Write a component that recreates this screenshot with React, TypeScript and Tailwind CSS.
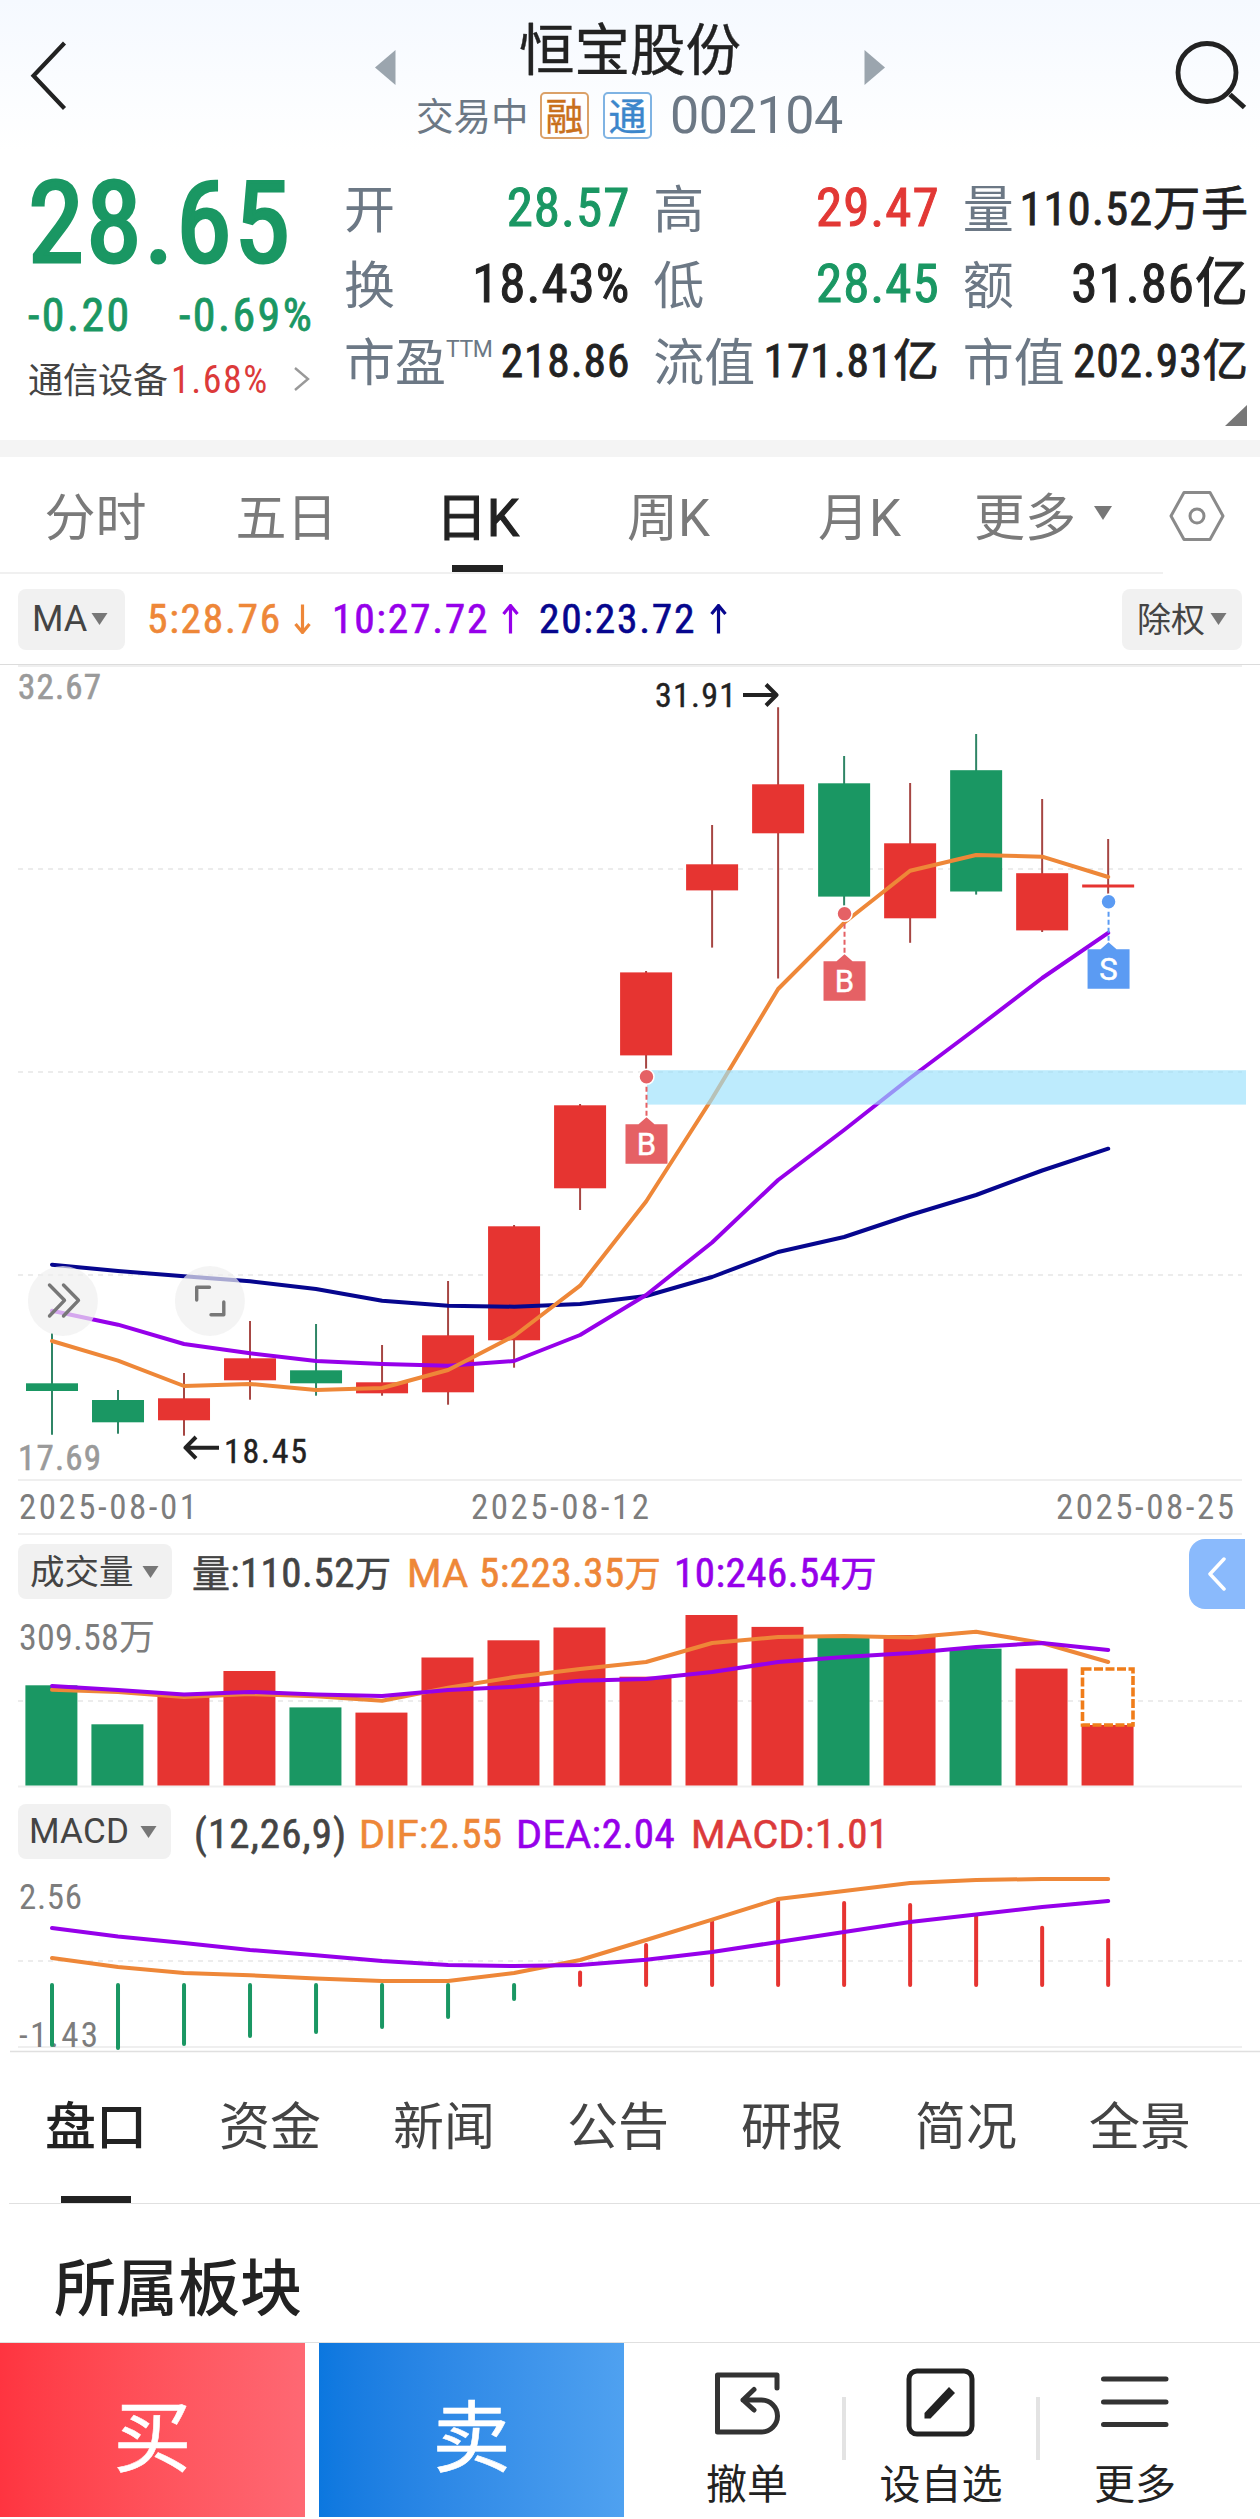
import type { ReactNode } from "react";

const RED = "#e63431";
const GREEN = "#1a9763";
const ORANGE = "#ee8738";
const PURPLE = "#9600ea";
const NAVY = "#06068e";

const cx = (i: number) => 52 + 66.01 * i;
const points = (ys: number[]) => ys.map((y, i) => `${cx(i).toFixed(1)},${y}`).join(" ");

function Line({ ys, color, w = 4 }: { ys: number[]; color: string; w?: number }) {
  return <polyline points={points(ys)} fill="none" stroke={color} strokeWidth={w} strokeLinecap="round" strokeLinejoin="round" />;
}

function Down({ className }: { className?: string }) {
  return (
    <svg className={className} width="17" height="12" viewBox="0 0 17 12">
      <path d="M.5 0h16L8.5 12z" fill="#777" />
    </svg>
  );
}

function Arrow({ up, color }: { up?: boolean; color: string }) {
  return (
    <svg width="17" height="30" viewBox="0 0 17 30" className={up ? "" : "rotate-180"}>
      <path d="M8.5 29.5V2M1.5 10l7-8.5 7 8.5" fill="none" stroke={color} strokeWidth="3.2" />
    </svg>
  );
}

function Header() {
  return (
    <header className="flex h-[150px] bg-gradient-to-b from-[#f5f9ff] to-white">
      <div className="w-[375px] shrink-0 pl-[28px] pt-[39px]">
        <svg width="42" height="74" viewBox="0 0 42 74">
          <path d="M36.500 4L5.500 36.700 36.500 69.500" fill="none" stroke="#222" strokeWidth="4.200" />
        </svg>
      </div>
      <svg className="mt-[50px] shrink-0" width="21" height="35" viewBox="0 0 21 35">
        <path d="M20.500 0v35L0 17.500z" fill="#9ba5ae" />
      </svg>
      <div className="w-[468px] shrink-0 pt-[24px]">
        <h1 className="text-center text-[55.500px] leading-none text-[#222] [-webkit-text-stroke:0.4px]">恒宝股份</h1>
        <div className="mt-[12.5px] flex h-[47px] items-center pl-[20px] leading-none text-[#6c7885]">
          <span className="w-[124px] translate-y-[2px] text-[37.500px]">交易中</span>
          <span className="flex h-[47px] w-[49px] justify-center rounded-[5px] border-2 border-[#dba168] bg-white pt-[4px] text-[38px] text-[#c9701c] [-webkit-text-stroke:0.4px]">融</span>
          <span className="ml-[14px] flex h-[47px] w-[49px] justify-center rounded-[5px] border-2 border-[#7fb3e3] bg-white pt-[4px] text-[38px] text-[#3c86cb] [-webkit-text-stroke:0.4px]">通</span>
          <span className="ml-[18px] text-[52px] tracking-[-0.4px]">002104</span>
        </div>
      </div>
      <svg className="mt-[50px] shrink-0" width="21" height="35" viewBox="0 0 21 35">
        <path d="M.5 0v35L21 17.500z" fill="#9ba5ae" />
      </svg>
      <svg className="ml-[286px] mt-[36px] shrink-0" width="80" height="80" viewBox="0 0 80 80">
        <circle cx="36" cy="36.500" r="29" fill="none" stroke="#222" strokeWidth="4.800" />
        <path d="M59 58.500L73.500 71.500" stroke="#222" strokeWidth="5" />
      </svg>
    </header>
  );
}

function Cell({ label, sup, children, cls }: { label: string; sup?: string; children: ReactNode; cls: string }) {
  return (
    <div className="flex h-[76.5px] items-center justify-between whitespace-nowrap leading-none">
      <span className="-ml-[2px] flex w-0 translate-y-[2px] text-[51px] text-[#6c7885]">
        {label}
        {sup && <sup className="top-0 text-[23px] leading-none tracking-[-0.5px]">{sup}</sup>}
      </span>
      <span className={cls}>{children}</span>
    </div>
  );
}

const big = "-mr-[2px] text-[53px] [font-stretch:87%] tracking-[1px] [-webkit-text-stroke:1px]";
const mid = "-mr-[2px] text-[45.500px] [font-stretch:87%] tracking-[0.9px] [-webkit-text-stroke:0.8px]";

function Quote() {
  return (
    <section className="flex h-[290px]">
      <div className="w-[346px] shrink-0 pl-[28px] pt-[17px] leading-none text-[#1a9763]">
        <div className="text-[113px] [font-stretch:87%] tracking-[2.2px] [-webkit-text-stroke:3.200px]">28.65</div>
        <div className="mt-[12px] flex text-[46px] [font-stretch:87%] tracking-[2.4px] [-webkit-text-stroke:0.8px]">
          <span className="w-[151px]">-0.20</span>
          <span className="whitespace-nowrap">-0.69%</span>
        </div>
        <div className="mt-[22px] flex h-[40px] items-center text-[35px] text-[#444]">
          <span className="translate-y-[1px]">通信设备</span>
          <span className="ml-[3px] w-[119px] text-[38px] [font-stretch:87%] tracking-[1.5px] text-[#dc3a3a]">1.68%</span>
          <svg className="ml-[3px] mb-[2px]" width="18" height="26" viewBox="0 0 18 26">
            <path d="M2 2l13 11L2 24" fill="none" stroke="#999" strokeWidth="2.400" />
          </svg>
        </div>
      </div>
      <div className="w-[901px] pt-[20px] text-[#222]">
        <div className="grid grid-cols-3 gap-x-[27px]">
          <Cell label="开" cls={big + " text-[#1a9763]"}>28.57</Cell>
          <Cell label="高" cls={big + " text-[#e23835]"}>29.47</Cell>
          <Cell label="量" cls={mid}><span className="text-[47px]">110.52万手</span></Cell>
          <Cell label="换" cls={big}>18.43%</Cell>
          <Cell label="低" cls={big + " text-[#1a9763]"}>28.45</Cell>
          <Cell label="额" cls={big}>31.86亿</Cell>
          <Cell label="市盈" sup="TTM" cls={mid}>218.86</Cell>
          <Cell label="流值" cls={mid}>171.81亿</Cell>
          <Cell label="市值" cls={mid}>202.93亿</Cell>
        </div>
        <svg className="ml-auto mt-[5px]" width="22" height="21" viewBox="0 0 22 21">
          <path d="M22 0v21H0z" fill="#777" />
        </svg>
      </div>
    </section>
  );
}

function PeriodTabs() {
  const tab = "flex h-full flex-col items-center justify-between pt-[36px] whitespace-nowrap";
  return (
    <nav className="flex h-[117px] text-[51px] leading-none text-[#7a7a7a]">
      <div className="flex w-[1163px] border-b-2 border-[#f0f0f0]">
        <span className={tab + " w-[191px]"}>分时</span>
        <span className={tab + " w-[191px]"}>五日</span>
        <span className={tab + " w-[191px] text-[#222] [-webkit-text-stroke:1.2px]"}>
          日K<i className="h-[7px] w-[51px] bg-[#222]" />
        </span>
        <span className={tab + " w-[191px]"}>周K</span>
        <span className={tab + " w-[191px]"}>月K</span>
        <span className="flex pl-[19px] pt-[36px]">
          更多
          <svg className="ml-[18px] mt-[13px]" width="18" height="14" viewBox="0 0 18 14">
            <path d="M0 0h18L9 14z" fill="#777" />
          </svg>
        </span>
      </div>
      <svg className="ml-[6px] mt-[33px]" width="56" height="52" viewBox="0 0 56 52">
        <path d="M15 2.500h26L54 26 41 49.500H15L2 26z" fill="none" stroke="#8a8a8a" strokeWidth="3" strokeLinejoin="round" />
        <circle cx="28" cy="26" r="7" fill="none" stroke="#8a8a8a" strokeWidth="3" />
      </svg>
    </nav>
  );
}

function MaRow() {
  const num = "text-[41.500px] [font-stretch:87%] tracking-[1.7px] [-webkit-text-stroke:0.6px]";
  return (
    <div className="flex h-[90px] items-center whitespace-nowrap pl-[18px] pr-[18px] leading-none">
      <div className="flex h-[61px] w-[107px] items-center rounded-lg bg-[#f1f1f1] pl-[14px] text-[36px] text-[#444]">
        MA<Down className="ml-[4px]" />
      </div>
      <div className="ml-[22px] flex items-center text-[#ee8738]">
        <span className={num + " w-[147px]"}>5:28.76</span>
        <Arrow color={ORANGE} />
      </div>
      <div className="ml-[21px] flex items-center text-[#9600ea]">
        <span className={num + " w-[170px]"}>10:27.72</span>
        <Arrow up color={PURPLE} />
      </div>
      <div className="ml-[20px] flex items-center text-[#06068e]">
        <span className={num + " w-[171px]"}>20:23.72</span>
        <Arrow up color={NAVY} />
      </div>
      <div className="ml-auto flex h-[61px] w-[120px] items-center rounded-lg bg-[#f1f1f1] pl-[15px] text-[34px] text-[#444]">
        <span className="translate-y-[1px]">除权</span>
        <Down className="ml-[5px]" />
      </div>
    </div>
  );
}

// color, body top, body bottom, high, low
const candles: [string, number, number, number, number][] = [
  [GREEN, 1383.3, 1391, 1333, 1434.7],
  [GREEN, 1400, 1422.3, 1390, 1433.7],
  [RED, 1398.3, 1420.3, 1373, 1435.7],
  [RED, 1358.3, 1380.3, 1321, 1399.7],
  [GREEN, 1370.3, 1383.3, 1324, 1395.7],
  [RED, 1382.3, 1393.3, 1345, 1395.7],
  [RED, 1335.3, 1392.3, 1281, 1404.7],
  [RED, 1226.3, 1340.3, 1225, 1367.7],
  [RED, 1105.3, 1188.3, 1104, 1210],
  [RED, 972.4, 1055.4, 971, 1069],
  [RED, 864.3, 890.4, 825, 947.6],
  [RED, 784.3, 833.3, 707.2, 978.6],
  [GREEN, 783.3, 896.6, 756, 905.6],
  [RED, 843.3, 918.3, 783, 942.8],
  [GREEN, 770.2, 891.5, 734, 894.6],
  [RED, 873.2, 930.4, 799, 932],
  [RED, 884.5, 887.5, 839, 893.9],
];

function Marker({ i, y, label, color }: { i: number; y: number; label: string; color: string }) {
  const x = cx(i) + 0.4;
  return (
    <g>
      <path d={`M${x} ${y + 10}V${y + 42}`} stroke={color} strokeWidth="2" strokeDasharray="5 3" />
      <circle cx={x} cy={y} r="7.500" fill={color} stroke="#fff" strokeWidth="1.500" />
      <path d={`M${x - 21} ${y + 47.5}h13l8 -7 8 7h13v39.500h-42z`} fill={color} />
      <text x={x} y={y + 78.5} textAnchor="middle" fontSize="31" fill="#fff" stroke="#fff" strokeWidth=".5">{label}</text>
    </g>
  );
}

const grid = { stroke: "#ececec", strokeWidth: 2, strokeDasharray: "5 5" };
const numText = "[font-stretch:87%]";

function PriceChart() {
  return (
    <svg className="block" width="1260" height="815" viewBox="0 664 1260 815">
      <path d="M0 664.500H1260" stroke="#dcdcdc" />
      <path d="M18 666H1242" stroke="#efefef" strokeWidth="2" />
      <path d="M18 869H1242M18 1072H1242M18 1275H1242" {...grid} />
      {candles.map(([c, t, b, h, l], i) => (
        <g key={i}>
          <path d={`M${cx(i)} ${h}V${l}`} stroke={c === RED ? "#a64643" : "#2f8566"} strokeWidth="2" />
          <rect x={cx(i) - 26} y={t} width="52" height={b - t} fill={c} />
        </g>
      ))}
      <Line color={NAVY} ys={[1264.7, 1271, 1276.3, 1281.3, 1289, 1300.7, 1305.7, 1306.7, 1304, 1296, 1277, 1252, 1237, 1215, 1195, 1170.5, 1148.7]} />
      <Line color={PURPLE} ys={[1310.7, 1324.7, 1344, 1353.3, 1361, 1364, 1365.7, 1361, 1335, 1295, 1242.5, 1180, 1130, 1078, 1028.5, 978, 932.8]} />
      <Line color={ORANGE} ys={[1341, 1360.7, 1386, 1384, 1390, 1388, 1370, 1336, 1285.7, 1201.5, 1098.5, 989, 922.8, 870.8, 855, 856.7, 877]} />
      <rect x="647" y="1070.200" width="599" height="34.400" fill="#9ae0fc" fillOpacity=".65" />
      <Marker i={9} y={1076.8} label="B" color="#e56165" />
      <Marker i={12} y={913.8} label="B" color="#e56165" />
      <Marker i={16} y={901.8} label="S" color="#5b9bf3" />
      <g fill="none" stroke="#777" strokeWidth="3.400" strokeLinecap="round" strokeLinejoin="round">
        <circle cx="62.900" cy="1301" r="35" fill="#f0f0f0" fillOpacity=".7" stroke="none" />
        <circle cx="209.900" cy="1301" r="35" fill="#f0f0f0" fillOpacity=".7" stroke="none" />
        <path d="M49.500 1285l15 15.300-15 15.700M63.500 1285l15 15.300-15 15.700M196.700 1300V1287.300H209.500M223.800 1302V1314.800H211" />
      </g>
      <g className={numText} fontSize="35">
        <g fill="#9a9a9a" stroke="#9a9a9a" strokeWidth=".6">
          <text x="18" y="699.300" textLength="83">32.67</text>
          <text x="18" y="1470" textLength="83">17.69</text>
        </g>
        <g fill="#222" stroke="#222" strokeWidth=".4" fontSize="34">
          <text x="655" y="707" textLength="81">31.91</text>
          <text x="224" y="1462.500" textLength="83">18.45</text>
        </g>
      </g>
      <path d="M743 695H776M766 684.500L776.500 695 766 705.500M219 1447.700H187M196 1437L185.500 1447.700 196 1458.400" fill="none" stroke="#222" strokeWidth="4" strokeLinejoin="round" />
    </svg>
  );
}

function Dates() {
  return (
    <div className="mx-[18px] flex h-[56px] items-center border-y-2 border-[#efefef] pl-[1px] text-[35px] leading-none tracking-[2.5px] text-[#7d7d7d] [font-stretch:87%]">
      <span className="w-[452px]">2025-08-01</span>
      <span className="w-[585px]">2025-08-12</span>
      <span>2025-08-25</span>
    </div>
  );
}

const wide = "text-[39.500px] [font-stretch:100%]";
const ind = "flex items-baseline text-[41px] [font-stretch:87%] tracking-[0.5px] [-webkit-text-stroke:0.6px]";

function VolumeRow() {
  return (
    <div className="flex h-[73px] whitespace-nowrap pl-[18px] leading-none">
      <div className="mt-[9px] flex h-[55px] w-[154px] items-center rounded-lg bg-[#f1f1f1] pl-[12px] text-[34.500px] text-[#444]">
        <span className="translate-y-[1px]">成交量</span>
        <Down className="ml-[8px]" />
      </div>
      <div className="flex pt-[18px]">
        <span className={ind + " ml-[20px] w-[215px] text-[#444]"}><span className="text-[38px]">量:</span>110.52<span className="text-[36px]">万</span></span>
        <span className={ind + " w-[267px] text-[#ee8738]"}><span className={wide}>MA&nbsp;</span>5:223.35<span className="text-[36px]">万</span></span>
        <span className={ind + " text-[#9600ea]"}>10:246.54<span className="text-[36px]">万</span></span>
      </div>
      <div className="ml-auto mr-[15px] mt-[4px] h-[70px] w-[56px] shrink-0 rounded-l-2xl bg-[#8abafc] pl-[18px] pt-[18px]">
        <svg width="20" height="34" viewBox="0 0 20 34">
          <path d="M17 2L3 17l14 15" fill="none" stroke="#fff" strokeWidth="3.500" strokeLinecap="round" strokeLinejoin="round" />
        </svg>
      </div>
    </div>
  );
}

const volumes: [string, number][] = [
  [GREEN, 1685.3], [GREEN, 1724.3], [RED, 1696], [RED, 1671], [GREEN, 1707.4], [RED, 1712.6],
  [RED, 1657.5], [RED, 1640.3], [RED, 1627.5], [RED, 1676.7], [RED, 1615], [RED, 1626.9],
  [GREEN, 1637.2], [RED, 1635], [GREEN, 1648.7], [RED, 1668.6], [RED, 1724.9],
];

function VolumeChart() {
  return (
    <svg className="block" width="1260" height="182" viewBox="0 1608 1260 182">
      <path d="M18 1701H1242" {...grid} />
      <path d="M18 1786.500H1242" stroke="#efefef" strokeWidth="2" />
      {volumes.map(([c, t], i) => (
        <rect key={i} x={cx(i) - 26.6} y={t} width="52" height={1785.5 - t} fill={c} />
      ))}
      <Line color={ORANGE} ys={[1689.8, 1692, 1697, 1694, 1696.3, 1700.8, 1687.7, 1677, 1669, 1662, 1643, 1637, 1636, 1637.6, 1631.8, 1643, 1662]} />
      <Line color={PURPLE} ys={[1686, 1690, 1694.6, 1691.9, 1694.6, 1696, 1690, 1686.7, 1680.8, 1679, 1672, 1662, 1657, 1653, 1647, 1643, 1650]} />
      <rect x="1082.500" y="1669" width="50.500" height="56" fill="#fff" stroke="#f07d1a" strokeWidth="3.600" strokeDasharray="9 2.500" />
      <text x="19" y="1650" fontSize="36" textLength="136" className={numText} fill="#7d7d7d">309.58万</text>
    </svg>
  );
}

function MacdRow() {
  return (
    <div className="flex h-[82px] whitespace-nowrap pl-[18px] leading-none">
      <div className="mt-[14px] flex h-[55px] w-[153px] items-center rounded-lg bg-[#f1f1f1] pl-[11px] text-[35px] text-[#444]">
        <span className="w-[101px] tracking-[0.2px]">MACD</span>
        <Down className="ml-[10px]" />
      </div>
      <div className="flex pt-[23.5px]">
        <span className={ind + " ml-[23px] w-[165px] tracking-[1.1px] text-[#444]"}>(12,26,9)</span>
        <span className={ind + " w-[157px] text-[#ee8738]"}><span className={wide}>DIF:</span>2.55</span>
        <span className={ind + " w-[175px] text-[#9600ea]"}><span className={wide}>DEA:</span>2.04</span>
        <span className={ind + " text-[#dc3a3a]"}><span className={wide}>MACD:</span>1.01</span>
      </div>
    </div>
  );
}

const hist = [2045, 2048, 2044, 2036, 2032, 2027, 2017, 1999, 1972.5, 1945, 1921.5, 1901, 1903, 1905, 1916.6, 1927.7, 1940];

function MacdChart() {
  return (
    <svg className="block overflow-visible" width="1260" height="181" viewBox="0 1872 1260 181">
      <path d="M18 1961H1242" {...grid} />
      <path d="M18 2047H1242" stroke="#efefef" strokeWidth="2" />
      <path d="M10 2051.500H1260" stroke="#e0e0e0" strokeWidth="1.500" />
      <text x="19" y="2046.500" fontSize="35" textLength="79" className={numText} fill="#7d7d7d">-1.43</text>
      <text x="19" y="1909" fontSize="35" textLength="63" className={numText} fill="#7d7d7d">2.56</text>
      {hist.map((y, i) => (
        <path key={i} d={`M${cx(i)} 1985V${y}`} stroke={i < 8 ? GREEN : RED} strokeWidth="4" strokeLinecap="round" />
      ))}
      <Line color={ORANGE} ys={[1958, 1967, 1973, 1975.3, 1978.4, 1981, 1981, 1973, 1960, 1940, 1919.6, 1899, 1891, 1883, 1880, 1879, 1879]} />
      <Line color={PURPLE} ys={[1928, 1936.4, 1943, 1950, 1955.3, 1961, 1965, 1966, 1965, 1959.8, 1952, 1942, 1932, 1922, 1914.6, 1907, 1901]} />
    </svg>
  );
}

function InfoTabs() {
  return (
    <nav className="ml-[9px] flex h-[151px] border-b border-[#e0e0e0] text-[51px] leading-none text-[#444]">
      <span className="flex w-[174px] flex-col items-center justify-between pt-[49px] font-medium text-[#222]">
        盘口<i className="h-[7px] w-[70px] bg-[#222]" />
      </span>
      {["资金", "新闻", "公告", "研报", "简况", "全景"].map((t) => (
        <span key={t} className="w-[174px] pt-[49px] text-center">{t}</span>
      ))}
    </nav>
  );
}

function Footer() {
  const item = "flex flex-col items-center text-[41px] leading-none text-[#222]";
  const trade = "h-[174px] w-[305px] pt-[20px] text-center text-[78px] leading-none text-white [-webkit-text-stroke:0.6px]";
  return (
    <footer className="flex h-[177px] border-t-[1.500px] border-[#e0e0e0]">
      <button className={trade + " bg-gradient-to-r from-[#fe3440] to-[#fe6873]"}>买</button>
      <button className={trade + " ml-[14px] bg-gradient-to-r from-[#0b77df] to-[#4fa1f0]"}>卖</button>
      <div className="flex flex-1">
        <div className={item + " w-[246px] pt-[27px]"}>
          <svg width="72" height="72" viewBox="0 0 72 72" fill="none" stroke="#333" strokeWidth="5" strokeLinecap="round" strokeLinejoin="round">
            <path d="M65 18V5H5.500V62H49.500a16 16 0 0 0 0-32H31M42 19.500L31 30l11 10" transform="translate(1 0)" />
          </svg>
          <span className="mt-[23px]">撤单</span>
        </div>
        <i className="mt-[54px] h-[63px] w-[4px] -ml-[28px] bg-[#e3e3e3]" />
        <div className={item + " w-[190px] pt-[24px]"}>
          <svg width="72" height="72" viewBox="0 0 72 72" fill="none" stroke="#222">
            <rect x="4" y="4" width="63" height="63" rx="8" strokeWidth="5" />
            <path d="M19.500 51.500V46L44 20l6 6-24.500 25.500z" fill="#222" stroke="none" />
          </svg>
          <span className="mt-[26px]">设自选</span>
        </div>
        <i className="mt-[54px] h-[63px] w-[4px] bg-[#e3e3e3]" />
        <div className={item + " w-[190px] pt-[27px]"}>
          <svg width="72" height="66" viewBox="0 0 72 66" stroke="#333" strokeWidth="5" strokeLinecap="round">
            <path d="M4.500 9H67M4.500 32H67M4.500 54.500H67" />
          </svg>
          <span className="mt-[29px]">更多</span>
        </div>
      </div>
    </footer>
  );
}

export default function App() {
  return (
    <main className="h-[2519px] w-[1260px] overflow-hidden bg-white [font-family:Roboto,'Noto_Sans_CJK_SC',sans-serif]">
      <Header />
      <Quote />
      <div className="h-[17px] bg-[#f4f4f4]" />
      <PeriodTabs />
      <MaRow />
      <PriceChart />
      <Dates />
      <VolumeRow />
      <VolumeChart />
      <MacdRow />
      <MacdChart />
      <InfoTabs />
      <h2 className="h-[138px] pl-[54px] pt-[55px] text-[62px] font-medium leading-none text-[#222]">所属板块</h2>
      <Footer />
    </main>
  );
}
